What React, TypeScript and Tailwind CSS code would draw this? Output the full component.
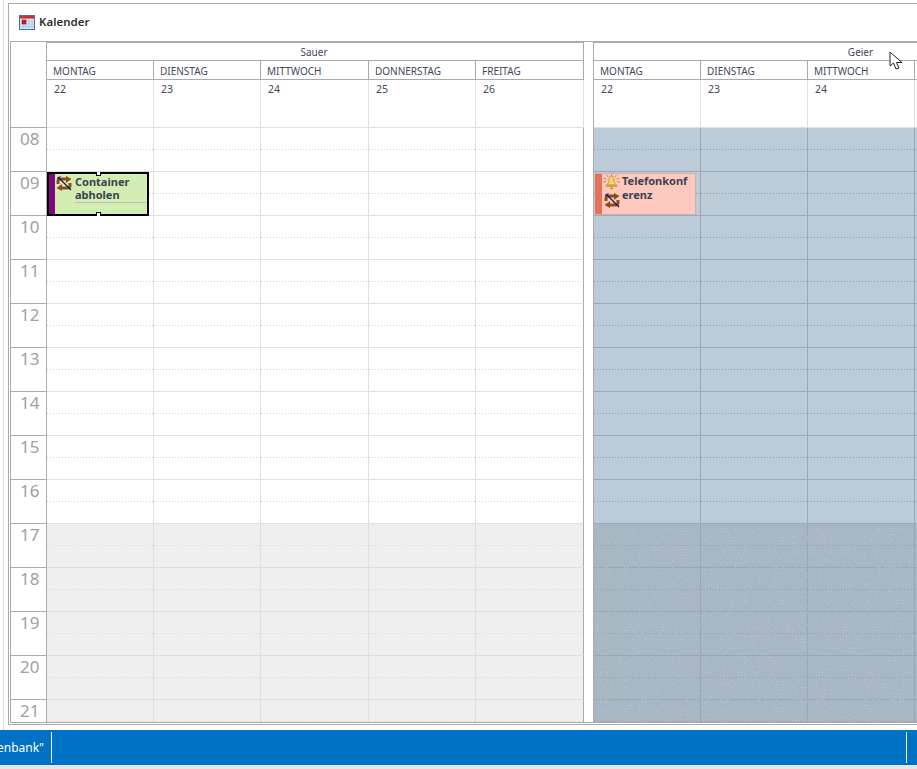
const font = { fontFamily: '"Noto Sans", Tahoma, sans-serif' };

const hours = ['08', '09', '10', '11', '12', '13', '14', '15', '16', '17', '18', '19', '20', '21'];
const leftWidths = ['w-[107px]', 'w-[107px]', 'w-[108px]', 'w-[107px]', 'w-[108px]'];
const rightWidths = ['w-[107px]', 'w-[107px]', 'w-[107px]', 'w-[107px]'];

function noiseDots(width: number, height: number, count: number) {
  let seed = 12345;
  const next = () => {
    seed = (seed * 16807) % 2147483647;
    return seed / 2147483647;
  };
  const out: { x: number; y: number; warm: boolean }[] = [];
  for (let i = 0; i < count; i++) {
    out.push({ x: Math.floor(next() * width / 3) * 3, y: Math.floor(next() * height / 3) * 3, warm: next() < 0.03 });
  }
  return out;
}

function SyncIcon({ className = '' }: { className?: string }) {
  return (
    <svg width="16" height="15" viewBox="0 0 16 15" className={className}>
      <path d="M2 8 V5.5 Q2 3 4.5 3 H10" fill="none" stroke="#8f4c14" strokeWidth="3" />
      <path d="M10 0 L15.5 3 L10 7 Z" fill="#8f4c14" />
      <path d="M14 7 V9.5 Q14 12 11.5 12 H6" fill="none" stroke="#8f4c14" strokeWidth="3" />
      <path d="M6 8 L0.5 12 L6 15 Z" fill="#8f4c14" />
      <path d="M2 1 L15 14" stroke="#0a1c66" strokeWidth="1.3" />
      <path d="M1 2.5 L4.5 0.5" stroke="#0a1c66" strokeWidth="1" />
    </svg>
  );
}

function BellIcon() {
  return (
    <svg width="17" height="16" viewBox="0 0 17 16">
      <path d="M8.5 2 C6.2 2.2 6 4 6 6 C6 8.4 5 10 3.5 11 L13.5 11 C12 10 11 8.4 11 6 C11 4 10.8 2.2 8.5 2 Z" fill="#f5d272" stroke="#b8892c" strokeWidth="0.7" />
      <rect x="3" y="11" width="11" height="1.8" fill="#e3ab35" stroke="#b8892c" strokeWidth="0.4" />
      <circle cx="8.5" cy="14.2" r="1.2" fill="#c98f24" />
      <rect x="8" y="0.5" width="1" height="1.6" fill="#b8892c" />
      <path d="M0.5 4 L3.5 5.2 M0 8 L3 7.6 M16.5 4 L13.5 5.2 M17 8 L14 7.6 M3.5 0.8 L5.2 3 M13.5 0.8 L11.8 3" stroke="#c9782a" strokeWidth="0.8" />
    </svg>
  );
}

function CalendarIcon() {
  return (
    <svg width="16" height="15" viewBox="0 0 16 15">
      <rect x="0.5" y="0.5" width="15" height="14" fill="#dce8fa" stroke="#4d6f9e" />
      <rect x="1" y="1" width="14" height="2.6" fill="#c4302b" />
      <path d="M1 6.5 H15 M1 9 H15 M1 11.5 H15 M4 4 V14 M7 4 V14 M10 4 V14 M13 4 V14" stroke="#a9c3e6" strokeWidth="0.8" />
      <rect x="3" y="5" width="4" height="4" fill="#c4201c" stroke="#7d1a1a" strokeWidth="0.5" />
    </svg>
  );
}

function Cell({ shaded, last, width }: { shaded: boolean; last: boolean; width: string }) {
  return (
    <div className={`h-[44px] ${width} shrink-0 border-r border-b border-[#dfdfdf] pt-[21px] ${last ? 'border-r-[#ababab]' : ''} ${shaded ? 'bg-[#efefef]' : 'bg-white'}`}>
      <div className="h-px bg-[repeating-linear-gradient(90deg,#d4d4d4_0,#d4d4d4_1px,transparent_1px,transparent_3px)]" />
    </div>
  );
}

function BlueCell({ shaded, width }: { shaded: boolean; width: string }) {
  return (
    <div className={`h-[44px] ${width} shrink-0 border-r border-b border-[#9aa7b4] pt-[21px] ${shaded ? 'bg-[#a9b6c3]' : 'bg-[#bdcad8]'}`}>
      <div className="h-px bg-[repeating-linear-gradient(90deg,#929eab_0,#929eab_1px,transparent_1px,transparent_3px)]" />
    </div>
  );
}

function DayHeads({ days, widths }: { days: string[]; widths: string[] }) {
  return (
    <div className="flex h-[19px] shrink-0 border-b border-[#a9a9a9]">
      {widths.map((w, i) => (
        <div key={i} className={`${w} shrink-0 border-r border-[#a9a9a9] pl-[6px] text-[10px] leading-[20px] text-[#3f4760]`}>
          {days[i]}
        </div>
      ))}
    </div>
  );
}

function Dates({ dates, widths }: { dates: string[]; widths: string[] }) {
  return (
    <div className="flex h-[48px] shrink-0">
      {widths.map((w, i) => (
        <div key={i} className={`${w} shrink-0 border-r border-b border-[#dfdfdf] pl-[7px] pt-[2px] text-[10.5px] leading-[15px] text-[#3f4760]`}>
          {dates[i]}
        </div>
      ))}
    </div>
  );
}

const dots = noiseDots(320, 194, 1700);

export default function App() {
  return (
    <div className="h-[769px] w-[917px] overflow-hidden bg-white flex flex-col" style={font}>
      <div className="h-[730px] shrink-0 bg-white pl-[3px] flex flex-col">
        <div className="flex-1 border-l border-[#d9d9d9] pl-[4px] pt-[3px] flex flex-col">
          <div className="h-[722px] shrink-0 border border-r-0 border-[#ababab] bg-white flex flex-col">
            <div className="h-[37px] shrink-0 flex items-center pl-[10px] gap-[4px]">
              <CalendarIcon />
              <span className="text-[11.5px] font-semibold text-[#303030] leading-none pb-[1px]">Kalender</span>
            </div>
            <div className="ml-[1px] h-[682px] shrink-0 border border-r-0 border-[#ababab] flex overflow-hidden">
              <div className="w-[36px] shrink-0 border-r border-[#ababab] flex flex-col">
                <div className="h-[86px] shrink-0 border-b border-[#ababab]" />
                {hours.map((h) => (
                  <div key={h} className="h-[44px] shrink-0 border-b border-[#ababab] pl-[9px] text-[17px] leading-[22px] text-[#a0a0a0]">
                    {h}
                  </div>
                ))}
              </div>
              <div className="w-[537px] shrink-0 flex flex-col">
                <div className="h-[19px] shrink-0 border-t border-b border-r border-[#ababab] pr-[2px] text-center text-[10px] leading-[18px] text-[#3f4760]">Sauer</div>
                <DayHeads days={['MONTAG', 'DIENSTAG', 'MITTWOCH', 'DONNERSTAG', 'FREITAG']} widths={leftWidths} />
                <Dates dates={['22', '23', '24', '25', '26']} widths={leftWidths} />
                {hours.map((h, i) => (
                  <div key={h} className="relative flex shrink-0">
                    {leftWidths.map((w, c) => (
                      <Cell key={c} shaded={i >= 9} last={c === 4} width={w} />
                    ))}
                    {h === '09' && (
                      <div className="absolute left-0 top-0 z-10 h-[44px] w-[102px] border-[2px] border-black bg-[#d3edb2] flex">
                        <div className="w-[6px] shrink-0 bg-[#7d0a7d]" />
                        <SyncIcon className="ml-[1px] mt-[2px] shrink-0" />
                        <div className="ml-[3px] w-[72px]">
                          <div className="text-[11px] font-bold leading-[13px] text-[#3b4250] border-b border-[#bcbcbc] pb-[1px] pt-[1px]">
                            Container abholen
                          </div>
                        </div>
                        <div className="absolute left-[47px] -top-[2px] h-[4px] w-[5px] bg-white border border-black border-t-0" />
                        <div className="absolute left-[47px] -bottom-[2px] h-[4px] w-[5px] bg-white border border-black border-b-0" />
                      </div>
                    )}
                  </div>
                ))}
              </div>
              <div className="w-[10px] shrink-0 border-r border-[#ababab] bg-white" />
              <div className="flex-1 flex flex-col relative">
                <div className="h-[19px] w-[533px] shrink-0 text-center text-[10px] leading-[20px] text-[#3f4760]">Geier</div>
                <div className="absolute left-0 right-0 top-[18px] h-px bg-[#ababab]" />
                <div className="absolute left-0 right-0 top-0 h-px bg-[#ababab]" />
                <DayHeads days={['MONTAG', 'DIENSTAG', 'MITTWOCH']} widths={rightWidths} />
                <Dates dates={['22', '23', '24']} widths={rightWidths} />
                {hours.map((h, i) => (
                  <div key={h} className="relative flex shrink-0">
                    {rightWidths.map((w, c) => (
                      <BlueCell key={c} shaded={i >= 9} width={w} />
                    ))}
                    {h === '09' && (
                      <div className="absolute left-[1px] top-px z-10 h-[42px] w-[101px] border border-[#c9b5ae] border-l-0 bg-[#fdc9bf] flex">
                        <div className="w-[7px] shrink-0 bg-[#e8705a]" />
                        <div className="ml-[1px] flex flex-col shrink-0 w-[18px]">
                          <BellIcon />
                          <SyncIcon className="ml-[1px] mt-[3px]" />
                        </div>
                        <div className="ml-[1px] w-[72px] break-all text-[11px] font-bold leading-[13.5px] text-[#3b4250]">
                          Telefonkonf erenz
                        </div>
                      </div>
                    )}
                  </div>
                ))}
                <svg className="absolute left-[3px] top-[486px] pointer-events-none" width="320" height="194">
                  {dots.map((d, i) => (
                    <rect key={i} x={d.x} y={d.y} width="1" height="1" fill={d.warm ? '#c4b3b3' : '#c3ccd4'} opacity="0.7" />
                  ))}
                </svg>
                <svg className="absolute left-[295px] top-[9px]" width="15" height="20" viewBox="0 0 15 20">
                  <path d="M1 1 V15 L4.5 12 L7 18 L10 17 L7.5 11.5 L13 11.5 Z" fill="#ffffff" stroke="#1a2230" strokeWidth="1" />
                </svg>
              </div>
            </div>
          </div>
        </div>
      </div>
      <div className="h-[35px] shrink-0 bg-[#0072c6] flex items-center text-white">
        <span className="text-[12px] leading-none w-[51px] overflow-hidden whitespace-nowrap flex justify-end pr-[7px]">enbank"</span>
        <div className="h-[31px] w-px bg-white" />
        <div className="flex-1" />
        <div className="h-[31px] w-px bg-white mr-[10px]" />
      </div>
      <div className="flex-1 bg-[#e6e6e6]" />
    </div>
  );
}
